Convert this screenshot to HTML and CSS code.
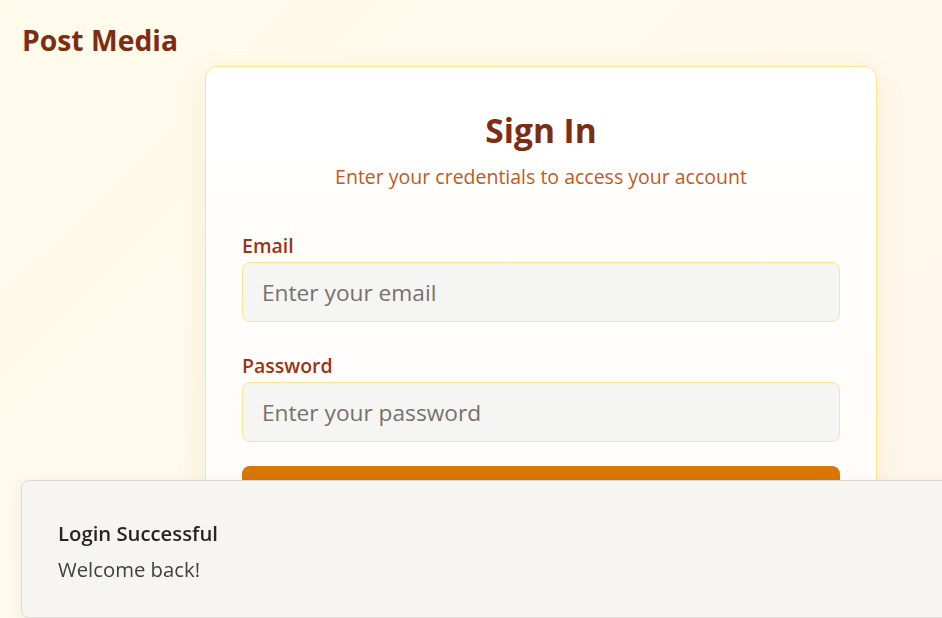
FILE: index.html
```html
<!DOCTYPE html>
<html lang="en">
<head>
<meta charset="utf-8">
<title>Post Media - Sign In</title>
<link rel="stylesheet" href="styles.css">
</head>
<body>
<div class="page">
  <header class="header">
    <h1 class="brand">Post Media</h1>
  </header>
  <main class="main">
    <section class="card">
      <div class="card-head">
        <h2 class="title">Sign In</h2>
        <p class="subtitle">Enter your credentials to access your account</p>
      </div>
      <form class="form">
        <div class="field">
          <label class="label" for="email">Email</label>
          <input class="input" id="email" type="email" placeholder="Enter your email">
        </div>
        <div class="field">
          <label class="label" for="password">Password</label>
          <input class="input" id="password" type="password" placeholder="Enter your password">
        </div>
        <button class="btn" type="button">Sign In</button>
      </form>
    </section>
  </main>
</div>
<div class="toast" role="status">
  <div class="toast-title">Login Successful</div>
  <div class="toast-desc">Welcome back!</div>
</div>
</body>
</html>
```
FILE: styles.css
```css
* { box-sizing: border-box; }
html, body { margin: 0; height: 100%; }
body {
  font-family: "Open Sans", "Noto Sans", sans-serif;
  background: linear-gradient(135deg, #fefbeb 0%, #fff7ea 100%);
  overflow: hidden;
}
.page { padding: 22px 22px 0 22px; }
.header { height: 36px; display: flex; align-items: center; }
.brand {
  margin: 0;
  font-size: 28.3px;
  font-weight: 700;
  color: #7c2d12;
}
.main { padding-left: 183px; padding-top: 8px; }
.card {
  width: 672px;
  background: linear-gradient(180deg, #ffffff, #fffcf9);
  border: 1px solid #fde68a;
  border-radius: 12px;
  box-shadow: 0 10px 30px rgba(180, 120, 40, 0.10);
  padding: 36px 36px 40px;
}
.card-head { text-align: center; margin-bottom: 43px; }
.title {
  margin: 7px 0 0;
  font-size: 33.5px;
  line-height: 40px;
  font-weight: 700;
  color: #7c2d12;
}
.subtitle {
  margin: 13px 0 0;
  font-size: 19.5px;
  line-height: 28px;
  color: #bf5a1c;
}
.form { display: flex; flex-direction: column; }
.field { display: flex; flex-direction: column; gap: 4px; margin-bottom: 32px; }
.field + .field { margin-bottom: 24px; }
.label {
  font-size: 19.5px;
  line-height: 24px;
  font-weight: 600;
  color: #9a3412;
}
.input {
  height: 60px;
  border: 1px solid #fde68a;
  border-radius: 8px;
  background: #f5f5f3;
  padding: 0 19px;
  font-family: inherit;
  font-size: 22.7px;
  color: #292524;
  outline: none;
}
.input::placeholder { color: #78716c; }
.btn {
  height: 56px;
  border: 0;
  border-radius: 8px;
  background: #d97706;
  color: #fff;
  font-family: inherit;
  font-size: 20px;
  font-weight: 600;
}
.toast {
  position: fixed;
  left: 21px;
  top: 480px;
  width: 960px;
  height: 138px;
  background: #f6f5f2;
  border: 1px solid #dcdad5;
  border-radius: 8px;
  box-shadow: 0 4px 16px rgba(0, 0, 0, 0.06);
  padding: 38px 36px;
}
.toast-title {
  font-size: 20.3px;
  line-height: 28px;
  font-weight: 600;
  color: #292524;
}
.toast-desc {
  margin-top: 8px;
  font-size: 20.3px;
  line-height: 28px;
  color: #44403c;
}
```
